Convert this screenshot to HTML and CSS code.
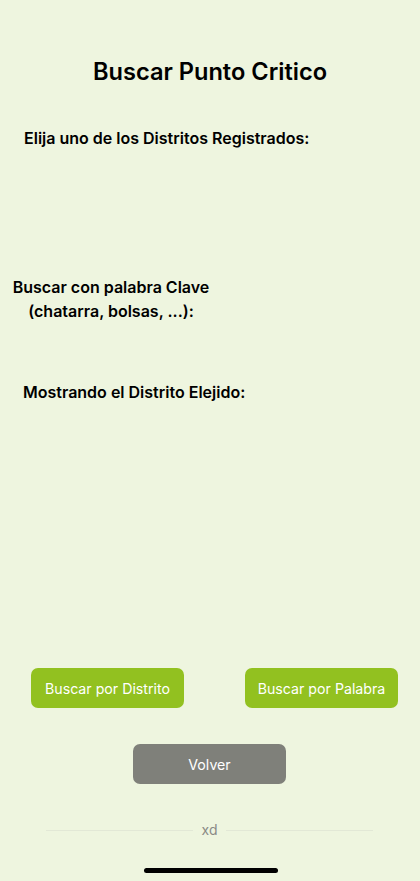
FILE: index.html
```html
<!DOCTYPE html>
<html lang="es">
<head>
<meta charset="utf-8">
<link rel="stylesheet" href="styles.css">
</head>
<body>
<div class="screen">
  <h1 class="title">Buscar Punto Critico</h1>
  <p class="label label-first">Elija uno de los Distritos Registrados:</p>
  <div class="spacer-a"></div>
  <p class="label label-keyword">Buscar con palabra Clave<br>(chatarra, bolsas, ...):</p>
  <div class="spacer-b"></div>
  <p class="label label-show">Mostrando el Distrito Elejido:</p>
  <div class="grow"></div>
  <div class="btn-row">
    <button class="btn btn-green">Buscar por Distrito</button>
    <button class="btn btn-green">Buscar por Palabra</button>
  </div>
  <div class="back-row">
    <button class="btn btn-gray">Volver</button>
  </div>
  <div class="divider">
    <span class="line"></span>
    <span class="divider-text">xd</span>
    <span class="line"></span>
  </div>
  <div class="home-row"><span class="home"></span></div>
</div>
</body>
</html>
```
FILE: styles.css
```css
html, body {
  margin: 0;
  padding: 0;
  background: #eef5df;
}
.screen {
  width: 420px;
  height: 881px;
  display: flex;
  flex-direction: column;
  font-family: Inter, "Noto Sans", sans-serif;
  color: #000;
  box-sizing: border-box;
}
.title {
  margin: 57px 0 0;
  font-size: 23.6px;
  font-weight: 600;
  line-height: 30px;
  text-align: center;
}
.label {
  margin: 0;
  font-size: 16px;
  font-weight: 600;
  line-height: 24px;
}
.label-first {
  margin-top: 39px;
  padding-left: 24px;
}
.spacer-a { height: 125px; }
.label-keyword {
  width: 222px;
  text-align: center;
}
.spacer-b { height: 57px; }
.label-show {
  padding-left: 23px;
}
.grow { flex: 1; }
.btn-row {
  display: flex;
  justify-content: space-between;
  padding: 0 22px 0 31px;
}
.btn {
  width: 153px;
  height: 40px;
  border: none;
  border-radius: 7px;
  color: #fff;
  font-family: Inter, "Noto Sans", sans-serif;
  font-size: 14.2px;
  font-weight: 400;
  padding: 0;
}
.btn-green { background: #92c120; }
.btn-gray { background: #7f807a; }
.back-row {
  display: flex;
  justify-content: center;
  margin-top: 36px;
  padding-right: 1px;
}
.divider {
  display: flex;
  align-items: center;
  margin: 34px 47px 0 46px;
  gap: 9px;
}
.line {
  flex: 1;
  height: 1px;
  background: #e2e8d6;
}
.divider-text {
  font-size: 14px;
  color: #8a8b86;
  line-height: 24px;
}
.home-row {
  display: flex;
  justify-content: center;
  margin-top: 26px;
  margin-bottom: 8px;
  padding-left: 2px;
}
.home {
  width: 134px;
  height: 5px;
  border-radius: 3px;
  background: #000;
}
```
